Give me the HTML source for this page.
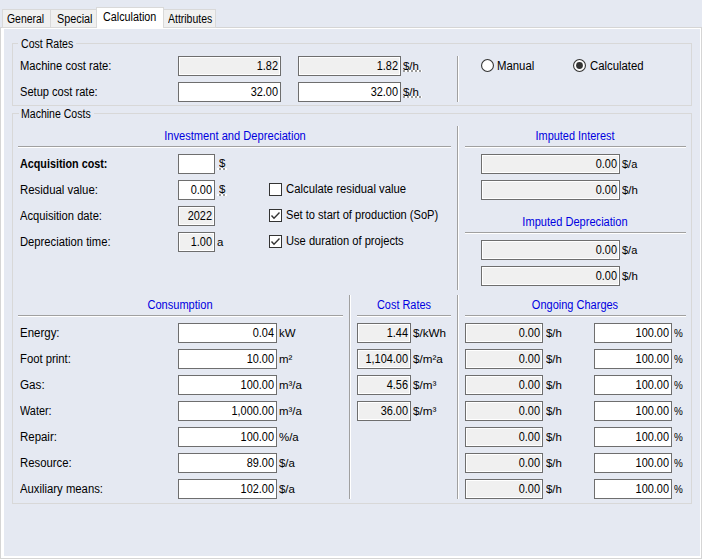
<!DOCTYPE html>
<html><head><meta charset="utf-8"><style>
html,body{margin:0;padding:0;width:702px;height:559px;overflow:hidden;background:#e5e9f2;}
body{position:relative;font-family:"Liberation Sans",sans-serif;font-size:12px;color:#000;}
.a{position:absolute;}
.t{position:absolute;line-height:13px;white-space:nowrap;}
</style></head><body>
<div class="a" style="left:0px;top:27px;width:702px;height:532px;background:#fff;box-sizing:border-box;border:1px solid #d5d5d5;"></div>
<div class="a" style="left:4px;top:29px;width:696px;height:527px;background:#e5e9f2;"></div>
<div class="a" style="left:2px;top:9px;width:49px;height:19px;background:#f0f0f0;box-sizing:border-box;border:1px solid #d9d9d9;"></div>
<div class="t" style="left:7px;top:13px;transform:scaleX(0.8690);transform-origin:0 0;">General</div>
<div class="a" style="left:50px;top:9px;width:47px;height:19px;background:#f0f0f0;box-sizing:border-box;border:1px solid #d9d9d9;"></div>
<div class="t" style="left:57px;top:13px;transform:scaleX(0.9026);transform-origin:0 0;">Special</div>
<div class="a" style="left:163px;top:9px;width:53px;height:19px;background:#f0f0f0;box-sizing:border-box;border:1px solid #d9d9d9;"></div>
<div class="t" style="left:168px;top:13px;transform:scaleX(0.8725);transform-origin:0 0;">Attributes</div>
<div class="a" style="left:96px;top:7px;width:68px;height:21px;background:#fff;box-sizing:border-box;border:1px solid #d9d9d9;border-bottom:none"></div>
<div class="t" style="left:103px;top:11px;transform:scaleX(0.8983);transform-origin:0 0;">Calculation</div>
<div class="a" style="left:12px;top:43px;width:680px;height:63px;box-sizing:border-box;border:1px solid #d8d8d8;"></div>
<div class="a" style="left:18px;top:43px;width:58px;height:1px;background:#e5e9f2;"></div>
<div class="t" style="left:21px;top:38px;transform:scaleX(0.8800);transform-origin:0 0;">Cost Rates</div>
<div class="t" style="left:20px;top:60px;transform:scaleX(0.9323);transform-origin:0 0;">Machine cost rate:</div>
<div class="t" style="left:20px;top:86px;transform:scaleX(0.9244);transform-origin:0 0;">Setup cost rate:</div>
<div class="a" style="left:178px;top:56px;width:103px;height:20px;background:#f0f0f0;box-sizing:border-box;border:1px solid #6e6e6e;box-shadow:inset 0 0 0 1px #fff;"></div>
<div class="t" style="left:78px;width:200px;text-align:right;top:60px;transform:scaleX(0.9100);transform-origin:100% 0;">1.82</div>
<div class="a" style="left:298px;top:56px;width:103px;height:20px;background:#f0f0f0;box-sizing:border-box;border:1px solid #6e6e6e;box-shadow:inset 0 0 0 1px #fff;"></div>
<div class="t" style="left:198px;width:200px;text-align:right;top:60px;transform:scaleX(0.9100);transform-origin:100% 0;">1.82</div>
<div class="a" style="left:178px;top:82px;width:103px;height:20px;background:#fff;box-sizing:border-box;border:1px solid #6e6e6e;box-shadow:inset 0 0 0 1px #fff;"></div>
<div class="t" style="left:78px;width:200px;text-align:right;top:86px;transform:scaleX(0.9100);transform-origin:100% 0;">32.00</div>
<div class="a" style="left:298px;top:82px;width:103px;height:20px;background:#fff;box-sizing:border-box;border:1px solid #6e6e6e;box-shadow:inset 0 0 0 1px #fff;"></div>
<div class="t" style="left:198px;width:200px;text-align:right;top:86px;transform:scaleX(0.9100);transform-origin:100% 0;">32.00</div>
<div class="t" style="left:403px;top:60px;transform:scaleX(1.0400);transform-origin:0 0;font-size:11px;">$/h</div>
<div class="t" style="left:403px;top:86px;transform:scaleX(1.0400);transform-origin:0 0;font-size:11px;">$/h</div>
<div class="a" style="left:403px;top:70px;width:19px;height:2px;background:repeating-linear-gradient(90deg,#9c9c9c 0 2px,#fff 2px 4px)"></div>
<div class="a" style="left:403px;top:96px;width:19px;height:2px;background:repeating-linear-gradient(90deg,#9c9c9c 0 2px,#fff 2px 4px)"></div>
<div class="a" style="left:457px;top:56px;width:1px;height:46px;background:#a0a0a0;"></div>
<div class="a" style="left:458px;top:56px;width:1px;height:46px;background:#fff;"></div>
<svg class="a" style="left:481px;top:59px" width="13" height="13"><circle cx="6.5" cy="6.5" r="5.95" fill="#fff" stroke="#333" stroke-width="1.1"/></svg>
<div class="t" style="left:497px;top:60px;transform:scaleX(0.9474);transform-origin:0 0;">Manual</div>
<svg class="a" style="left:573px;top:59px" width="13" height="13"><circle cx="6.5" cy="6.5" r="5.95" fill="#fff" stroke="#333" stroke-width="1.1"/><circle cx="6.5" cy="6.5" r="3.4" fill="#333"/></svg>
<div class="t" style="left:590px;top:60px;transform:scaleX(0.9464);transform-origin:0 0;">Calculated</div>
<div class="a" style="left:12px;top:113px;width:680px;height:391px;box-sizing:border-box;border:1px solid #d8d8d8;"></div>
<div class="a" style="left:19px;top:113px;width:75px;height:1px;background:#e5e9f2;"></div>
<div class="t" style="left:21px;top:108px;transform:scaleX(0.8782);transform-origin:0 0;">Machine Costs</div>
<div class="t" style="left:85px;width:300px;text-align:center;top:130px;transform:scaleX(0.9272);transform-origin:50% 0;color:#0000e0;">Investment and Depreciation</div>
<div class="a" style="left:18px;top:146px;width:433px;height:1px;background:#a0a0a0;"></div>
<div class="a" style="left:18px;top:147px;width:433px;height:1px;background:#fff;"></div>
<div class="a" style="left:457px;top:126px;width:1px;height:164px;background:#a0a0a0;"></div>
<div class="a" style="left:458px;top:126px;width:1px;height:164px;background:#fff;"></div>
<div class="t" style="left:20px;top:158px;transform:scaleX(0.8979);transform-origin:0 0;font-weight:bold;">Acquisition cost:</div>
<div class="t" style="left:20px;top:184px;transform:scaleX(0.9500);transform-origin:0 0;">Residual value:</div>
<div class="t" style="left:20px;top:210px;transform:scaleX(0.9310);transform-origin:0 0;">Acquisition date:</div>
<div class="t" style="left:20px;top:236px;transform:scaleX(0.9368);transform-origin:0 0;">Depreciation time:</div>
<div class="a" style="left:178px;top:154px;width:37px;height:20px;background:#fff;box-sizing:border-box;border:1px solid #6e6e6e;box-shadow:inset 0 0 0 1px #fff;"></div>
<div class="a" style="left:178px;top:180px;width:37px;height:20px;background:#fff;box-sizing:border-box;border:1px solid #6e6e6e;box-shadow:inset 0 0 0 1px #fff;"></div>
<div class="t" style="left:12px;width:200px;text-align:right;top:184px;transform:scaleX(0.9100);transform-origin:100% 0;">0.00</div>
<div class="a" style="left:178px;top:206px;width:37px;height:20px;background:#f0f0f0;box-sizing:border-box;border:1px solid #6e6e6e;box-shadow:inset 0 0 0 1px #fff;"></div>
<div class="t" style="left:12px;width:200px;text-align:right;top:210px;transform:scaleX(0.9100);transform-origin:100% 0;">2022</div>
<div class="a" style="left:178px;top:232px;width:37px;height:20px;background:#f0f0f0;box-sizing:border-box;border:1px solid #6e6e6e;box-shadow:inset 0 0 0 1px #fff;"></div>
<div class="t" style="left:12px;width:200px;text-align:right;top:236px;transform:scaleX(0.9100);transform-origin:100% 0;">1.00</div>
<div class="t" style="left:219px;top:157px;transform:scaleX(1.0400);transform-origin:0 0;font-size:11px;">$</div>
<div class="t" style="left:219px;top:183px;transform:scaleX(1.0400);transform-origin:0 0;font-size:11px;">$</div>
<div class="a" style="left:217px;top:168px;width:10px;height:2px;background:repeating-linear-gradient(90deg,#fff 0 2px,#9c9c9c 2px 4px)"></div>
<div class="a" style="left:217px;top:194px;width:10px;height:2px;background:repeating-linear-gradient(90deg,#fff 0 2px,#9c9c9c 2px 4px)"></div>
<div class="t" style="left:217px;top:236px;transform:scaleX(1.0400);transform-origin:0 0;font-size:11px;">a</div>
<div class="a" style="left:269px;top:183px;width:13px;height:13px;background:#fff;box-sizing:border-box;border:1px solid #333;"></div>
<div class="a" style="left:269px;top:209px;width:13px;height:13px;background:#fff;box-sizing:border-box;border:1px solid #333;"></div>
<svg class="a" style="left:269px;top:209px" width="13" height="13"><path d="M2.5 6.5 L5 9.2 L10.5 3.5" fill="none" stroke="#333" stroke-width="1.4"/></svg>
<div class="a" style="left:269px;top:235px;width:13px;height:13px;background:#fff;box-sizing:border-box;border:1px solid #333;"></div>
<svg class="a" style="left:269px;top:235px" width="13" height="13"><path d="M2.5 6.5 L5 9.2 L10.5 3.5" fill="none" stroke="#333" stroke-width="1.4"/></svg>
<div class="t" style="left:286px;top:183px;transform:scaleX(0.9425);transform-origin:0 0;">Calculate residual value</div>
<div class="t" style="left:286px;top:209px;transform:scaleX(0.9239);transform-origin:0 0;">Set to start of production (SoP)</div>
<div class="t" style="left:286px;top:235px;transform:scaleX(0.9286);transform-origin:0 0;">Use duration of projects</div>
<div class="t" style="left:425px;width:300px;text-align:center;top:130px;transform:scaleX(0.9105);transform-origin:50% 0;color:#0000e0;">Imputed Interest</div>
<div class="a" style="left:465px;top:146px;width:221px;height:1px;background:#a0a0a0;"></div>
<div class="a" style="left:465px;top:147px;width:221px;height:1px;background:#fff;"></div>
<div class="a" style="left:481px;top:154px;width:139px;height:20px;background:#f0f0f0;box-sizing:border-box;border:1px solid #6e6e6e;box-shadow:inset 0 0 0 1px #fff;"></div>
<div class="t" style="left:417px;width:200px;text-align:right;top:158px;transform:scaleX(0.9100);transform-origin:100% 0;">0.00</div>
<div class="a" style="left:481px;top:180px;width:139px;height:20px;background:#f0f0f0;box-sizing:border-box;border:1px solid #6e6e6e;box-shadow:inset 0 0 0 1px #fff;"></div>
<div class="t" style="left:417px;width:200px;text-align:right;top:184px;transform:scaleX(0.9100);transform-origin:100% 0;">0.00</div>
<div class="t" style="left:622px;top:158px;transform:scaleX(1.0000);transform-origin:0 0;font-size:11px;">$/a</div>
<div class="t" style="left:622px;top:184px;transform:scaleX(1.0400);transform-origin:0 0;font-size:11px;">$/h</div>
<div class="t" style="left:425px;width:300px;text-align:center;top:216px;transform:scaleX(0.9230);transform-origin:50% 0;color:#0000e0;">Imputed Depreciation</div>
<div class="a" style="left:465px;top:232px;width:221px;height:1px;background:#a0a0a0;"></div>
<div class="a" style="left:465px;top:233px;width:221px;height:1px;background:#fff;"></div>
<div class="a" style="left:481px;top:240px;width:139px;height:20px;background:#f0f0f0;box-sizing:border-box;border:1px solid #6e6e6e;box-shadow:inset 0 0 0 1px #fff;"></div>
<div class="t" style="left:417px;width:200px;text-align:right;top:244px;transform:scaleX(0.9100);transform-origin:100% 0;">0.00</div>
<div class="a" style="left:481px;top:266px;width:139px;height:20px;background:#f0f0f0;box-sizing:border-box;border:1px solid #6e6e6e;box-shadow:inset 0 0 0 1px #fff;"></div>
<div class="t" style="left:417px;width:200px;text-align:right;top:270px;transform:scaleX(0.9100);transform-origin:100% 0;">0.00</div>
<div class="t" style="left:622px;top:244px;transform:scaleX(1.0000);transform-origin:0 0;font-size:11px;">$/a</div>
<div class="t" style="left:622px;top:270px;transform:scaleX(1.0400);transform-origin:0 0;font-size:11px;">$/h</div>
<div class="t" style="left:30px;width:300px;text-align:center;top:299px;transform:scaleX(0.9214);transform-origin:50% 0;color:#0000e0;">Consumption</div>
<div class="a" style="left:18px;top:315px;width:325px;height:1px;background:#a0a0a0;"></div>
<div class="a" style="left:18px;top:316px;width:325px;height:1px;background:#fff;"></div>
<div class="a" style="left:349px;top:295px;width:1px;height:204px;background:#a0a0a0;"></div>
<div class="a" style="left:350px;top:295px;width:1px;height:204px;background:#fff;"></div>
<div class="t" style="left:254px;width:300px;text-align:center;top:299px;transform:scaleX(0.9100);transform-origin:50% 0;color:#0000e0;">Cost Rates</div>
<div class="a" style="left:357px;top:315px;width:94px;height:1px;background:#a0a0a0;"></div>
<div class="a" style="left:357px;top:316px;width:94px;height:1px;background:#fff;"></div>
<div class="a" style="left:457px;top:295px;width:1px;height:204px;background:#a0a0a0;"></div>
<div class="a" style="left:458px;top:295px;width:1px;height:204px;background:#fff;"></div>
<div class="t" style="left:425px;width:300px;text-align:center;top:299px;transform:scaleX(0.9170);transform-origin:50% 0;color:#0000e0;">Ongoing Charges</div>
<div class="a" style="left:465px;top:315px;width:221px;height:1px;background:#a0a0a0;"></div>
<div class="a" style="left:465px;top:316px;width:221px;height:1px;background:#fff;"></div>
<div class="t" style="left:20px;top:327px;transform:scaleX(0.9564);transform-origin:0 0;">Energy:</div>
<div class="a" style="left:178px;top:323px;width:99px;height:20px;background:#fff;box-sizing:border-box;border:1px solid #6e6e6e;box-shadow:inset 0 0 0 1px #fff;"></div>
<div class="t" style="left:74px;width:200px;text-align:right;top:327px;transform:scaleX(0.9100);transform-origin:100% 0;">0.04</div>
<div class="t" style="left:279px;top:327px;transform:scaleX(1.0400);transform-origin:0 0;font-size:11px;">kW</div>
<div class="a" style="left:357px;top:323px;width:54px;height:20px;background:#f0f0f0;box-sizing:border-box;border:1px solid #6e6e6e;box-shadow:inset 0 0 0 1px #fff;"></div>
<div class="t" style="left:208px;width:200px;text-align:right;top:327px;transform:scaleX(0.9100);transform-origin:100% 0;">1.44</div>
<div class="t" style="left:413px;top:327px;transform:scaleX(1.0600);transform-origin:0 0;font-size:11px;">$/kWh</div>
<div class="a" style="left:465px;top:323px;width:78px;height:20px;background:#f0f0f0;box-sizing:border-box;border:1px solid #6e6e6e;box-shadow:inset 0 0 0 1px #fff;"></div>
<div class="t" style="left:340px;width:200px;text-align:right;top:327px;transform:scaleX(0.9100);transform-origin:100% 0;">0.00</div>
<div class="t" style="left:546px;top:327px;transform:scaleX(1.0400);transform-origin:0 0;font-size:11px;">$/h</div>
<div class="a" style="left:594px;top:323px;width:78px;height:20px;background:#fff;box-sizing:border-box;border:1px solid #6e6e6e;box-shadow:inset 0 0 0 1px #fff;"></div>
<div class="t" style="left:469px;width:200px;text-align:right;top:327px;transform:scaleX(0.9100);transform-origin:100% 0;">100.00</div>
<div class="t" style="left:674px;top:327px;transform:scaleX(0.9000);transform-origin:0 0;font-size:11px;">%</div>
<div class="t" style="left:20px;top:353px;transform:scaleX(0.9423);transform-origin:0 0;">Foot print:</div>
<div class="a" style="left:178px;top:349px;width:99px;height:20px;background:#fff;box-sizing:border-box;border:1px solid #6e6e6e;box-shadow:inset 0 0 0 1px #fff;"></div>
<div class="t" style="left:74px;width:200px;text-align:right;top:353px;transform:scaleX(0.9100);transform-origin:100% 0;">10.00</div>
<div class="t" style="left:279px;top:353px;transform:scaleX(1.0400);transform-origin:0 0;font-size:11px;">m²</div>
<div class="a" style="left:357px;top:349px;width:54px;height:20px;background:#f0f0f0;box-sizing:border-box;border:1px solid #6e6e6e;box-shadow:inset 0 0 0 1px #fff;"></div>
<div class="t" style="left:208px;width:200px;text-align:right;top:353px;transform:scaleX(0.9100);transform-origin:100% 0;">1,104.00</div>
<div class="t" style="left:413px;top:353px;transform:scaleX(1.0600);transform-origin:0 0;font-size:11px;">$/m²a</div>
<div class="a" style="left:465px;top:349px;width:78px;height:20px;background:#f0f0f0;box-sizing:border-box;border:1px solid #6e6e6e;box-shadow:inset 0 0 0 1px #fff;"></div>
<div class="t" style="left:340px;width:200px;text-align:right;top:353px;transform:scaleX(0.9100);transform-origin:100% 0;">0.00</div>
<div class="t" style="left:546px;top:353px;transform:scaleX(1.0400);transform-origin:0 0;font-size:11px;">$/h</div>
<div class="a" style="left:594px;top:349px;width:78px;height:20px;background:#fff;box-sizing:border-box;border:1px solid #6e6e6e;box-shadow:inset 0 0 0 1px #fff;"></div>
<div class="t" style="left:469px;width:200px;text-align:right;top:353px;transform:scaleX(0.9100);transform-origin:100% 0;">100.00</div>
<div class="t" style="left:674px;top:353px;transform:scaleX(0.9000);transform-origin:0 0;font-size:11px;">%</div>
<div class="t" style="left:20px;top:379px;transform:scaleX(0.9750);transform-origin:0 0;">Gas:</div>
<div class="a" style="left:178px;top:375px;width:99px;height:20px;background:#fff;box-sizing:border-box;border:1px solid #6e6e6e;box-shadow:inset 0 0 0 1px #fff;"></div>
<div class="t" style="left:74px;width:200px;text-align:right;top:379px;transform:scaleX(0.9100);transform-origin:100% 0;">100.00</div>
<div class="t" style="left:279px;top:379px;transform:scaleX(1.0400);transform-origin:0 0;font-size:11px;">m³/a</div>
<div class="a" style="left:357px;top:375px;width:54px;height:20px;background:#f0f0f0;box-sizing:border-box;border:1px solid #6e6e6e;box-shadow:inset 0 0 0 1px #fff;"></div>
<div class="t" style="left:208px;width:200px;text-align:right;top:379px;transform:scaleX(0.9100);transform-origin:100% 0;">4.56</div>
<div class="t" style="left:413px;top:379px;transform:scaleX(1.0600);transform-origin:0 0;font-size:11px;">$/m³</div>
<div class="a" style="left:465px;top:375px;width:78px;height:20px;background:#f0f0f0;box-sizing:border-box;border:1px solid #6e6e6e;box-shadow:inset 0 0 0 1px #fff;"></div>
<div class="t" style="left:340px;width:200px;text-align:right;top:379px;transform:scaleX(0.9100);transform-origin:100% 0;">0.00</div>
<div class="t" style="left:546px;top:379px;transform:scaleX(1.0400);transform-origin:0 0;font-size:11px;">$/h</div>
<div class="a" style="left:594px;top:375px;width:78px;height:20px;background:#fff;box-sizing:border-box;border:1px solid #6e6e6e;box-shadow:inset 0 0 0 1px #fff;"></div>
<div class="t" style="left:469px;width:200px;text-align:right;top:379px;transform:scaleX(0.9100);transform-origin:100% 0;">100.00</div>
<div class="t" style="left:674px;top:379px;transform:scaleX(0.9000);transform-origin:0 0;font-size:11px;">%</div>
<div class="t" style="left:20px;top:405px;transform:scaleX(0.9059);transform-origin:0 0;">Water:</div>
<div class="a" style="left:178px;top:401px;width:99px;height:20px;background:#fff;box-sizing:border-box;border:1px solid #6e6e6e;box-shadow:inset 0 0 0 1px #fff;"></div>
<div class="t" style="left:74px;width:200px;text-align:right;top:405px;transform:scaleX(0.9100);transform-origin:100% 0;">1,000.00</div>
<div class="t" style="left:279px;top:405px;transform:scaleX(1.0400);transform-origin:0 0;font-size:11px;">m³/a</div>
<div class="a" style="left:357px;top:401px;width:54px;height:20px;background:#f0f0f0;box-sizing:border-box;border:1px solid #6e6e6e;box-shadow:inset 0 0 0 1px #fff;"></div>
<div class="t" style="left:208px;width:200px;text-align:right;top:405px;transform:scaleX(0.9100);transform-origin:100% 0;">36.00</div>
<div class="t" style="left:413px;top:405px;transform:scaleX(1.0600);transform-origin:0 0;font-size:11px;">$/m³</div>
<div class="a" style="left:465px;top:401px;width:78px;height:20px;background:#f0f0f0;box-sizing:border-box;border:1px solid #6e6e6e;box-shadow:inset 0 0 0 1px #fff;"></div>
<div class="t" style="left:340px;width:200px;text-align:right;top:405px;transform:scaleX(0.9100);transform-origin:100% 0;">0.00</div>
<div class="t" style="left:546px;top:405px;transform:scaleX(1.0400);transform-origin:0 0;font-size:11px;">$/h</div>
<div class="a" style="left:594px;top:401px;width:78px;height:20px;background:#fff;box-sizing:border-box;border:1px solid #6e6e6e;box-shadow:inset 0 0 0 1px #fff;"></div>
<div class="t" style="left:469px;width:200px;text-align:right;top:405px;transform:scaleX(0.9100);transform-origin:100% 0;">100.00</div>
<div class="t" style="left:674px;top:405px;transform:scaleX(0.9000);transform-origin:0 0;font-size:11px;">%</div>
<div class="t" style="left:20px;top:431px;transform:scaleX(0.9541);transform-origin:0 0;">Repair:</div>
<div class="a" style="left:178px;top:427px;width:99px;height:20px;background:#fff;box-sizing:border-box;border:1px solid #6e6e6e;box-shadow:inset 0 0 0 1px #fff;"></div>
<div class="t" style="left:74px;width:200px;text-align:right;top:431px;transform:scaleX(0.9100);transform-origin:100% 0;">100.00</div>
<div class="t" style="left:279px;top:431px;transform:scaleX(1.0400);transform-origin:0 0;font-size:11px;">%/a</div>
<div class="a" style="left:465px;top:427px;width:78px;height:20px;background:#f0f0f0;box-sizing:border-box;border:1px solid #6e6e6e;box-shadow:inset 0 0 0 1px #fff;"></div>
<div class="t" style="left:340px;width:200px;text-align:right;top:431px;transform:scaleX(0.9100);transform-origin:100% 0;">0.00</div>
<div class="t" style="left:546px;top:431px;transform:scaleX(1.0400);transform-origin:0 0;font-size:11px;">$/h</div>
<div class="a" style="left:594px;top:427px;width:78px;height:20px;background:#fff;box-sizing:border-box;border:1px solid #6e6e6e;box-shadow:inset 0 0 0 1px #fff;"></div>
<div class="t" style="left:469px;width:200px;text-align:right;top:431px;transform:scaleX(0.9100);transform-origin:100% 0;">100.00</div>
<div class="t" style="left:674px;top:431px;transform:scaleX(0.9000);transform-origin:0 0;font-size:11px;">%</div>
<div class="t" style="left:20px;top:457px;transform:scaleX(0.9434);transform-origin:0 0;">Resource:</div>
<div class="a" style="left:178px;top:453px;width:99px;height:20px;background:#fff;box-sizing:border-box;border:1px solid #6e6e6e;box-shadow:inset 0 0 0 1px #fff;"></div>
<div class="t" style="left:74px;width:200px;text-align:right;top:457px;transform:scaleX(0.9100);transform-origin:100% 0;">89.00</div>
<div class="t" style="left:279px;top:457px;transform:scaleX(1.0400);transform-origin:0 0;font-size:11px;">$/a</div>
<div class="a" style="left:465px;top:453px;width:78px;height:20px;background:#f0f0f0;box-sizing:border-box;border:1px solid #6e6e6e;box-shadow:inset 0 0 0 1px #fff;"></div>
<div class="t" style="left:340px;width:200px;text-align:right;top:457px;transform:scaleX(0.9100);transform-origin:100% 0;">0.00</div>
<div class="t" style="left:546px;top:457px;transform:scaleX(1.0400);transform-origin:0 0;font-size:11px;">$/h</div>
<div class="a" style="left:594px;top:453px;width:78px;height:20px;background:#fff;box-sizing:border-box;border:1px solid #6e6e6e;box-shadow:inset 0 0 0 1px #fff;"></div>
<div class="t" style="left:469px;width:200px;text-align:right;top:457px;transform:scaleX(0.9100);transform-origin:100% 0;">100.00</div>
<div class="t" style="left:674px;top:457px;transform:scaleX(0.9000);transform-origin:0 0;font-size:11px;">%</div>
<div class="t" style="left:20px;top:483px;transform:scaleX(0.9425);transform-origin:0 0;">Auxiliary means:</div>
<div class="a" style="left:178px;top:479px;width:99px;height:20px;background:#fff;box-sizing:border-box;border:1px solid #6e6e6e;box-shadow:inset 0 0 0 1px #fff;"></div>
<div class="t" style="left:74px;width:200px;text-align:right;top:483px;transform:scaleX(0.9100);transform-origin:100% 0;">102.00</div>
<div class="t" style="left:279px;top:483px;transform:scaleX(1.0400);transform-origin:0 0;font-size:11px;">$/a</div>
<div class="a" style="left:465px;top:479px;width:78px;height:20px;background:#f0f0f0;box-sizing:border-box;border:1px solid #6e6e6e;box-shadow:inset 0 0 0 1px #fff;"></div>
<div class="t" style="left:340px;width:200px;text-align:right;top:483px;transform:scaleX(0.9100);transform-origin:100% 0;">0.00</div>
<div class="t" style="left:546px;top:483px;transform:scaleX(1.0400);transform-origin:0 0;font-size:11px;">$/h</div>
<div class="a" style="left:594px;top:479px;width:78px;height:20px;background:#fff;box-sizing:border-box;border:1px solid #6e6e6e;box-shadow:inset 0 0 0 1px #fff;"></div>
<div class="t" style="left:469px;width:200px;text-align:right;top:483px;transform:scaleX(0.9100);transform-origin:100% 0;">100.00</div>
<div class="t" style="left:674px;top:483px;transform:scaleX(0.9000);transform-origin:0 0;font-size:11px;">%</div>
</body></html>
